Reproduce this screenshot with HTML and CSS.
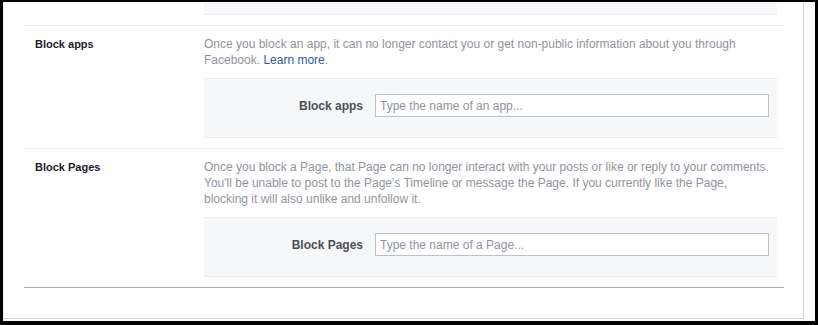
FILE: index.html
```html
<!DOCTYPE html>
<html lang="en">
<head>
<meta charset="utf-8">
<title>Blocking</title>
<link rel="stylesheet" href="styles.css">
</head>
<body>
<div class="frame">
  <div class="panel">
    <div class="row row-prev">
      <div class="row-title"></div>
      <div class="row-body">
        <div class="gray-box gray-box-tail"></div>
      </div>
    </div>
    <div class="row">
      <div class="row-title">Block apps</div>
      <div class="row-body">
        <p class="desc">Once you block an app, it can no longer contact you or get non-public information about you through Facebook. <a class="link" href="#">Learn more</a>.</p>
        <div class="gray-box">
          <label class="field-label" for="apps">Block apps</label>
          <input class="field-input" id="apps" type="text" placeholder="Type the name of an app...">
        </div>
      </div>
    </div>
    <div class="row">
      <div class="row-title">Block Pages</div>
      <div class="row-body">
        <p class="desc">Once you block a Page, that Page can no longer interact with your posts or like or reply to your comments. You'll be unable to post to the Page's Timeline or message the Page. If you currently like the Page, blocking it will also unlike and unfollow it.</p>
        <div class="gray-box">
          <label class="field-label" for="pages">Block Pages</label>
          <input class="field-input" id="pages" type="text" placeholder="Type the name of a Page...">
        </div>
      </div>
    </div>
    <div class="end-rule"></div>
  </div>
</div>
</body>
</html>
```

FILE: styles.css
```css
* { box-sizing: border-box; }

html, body {
  margin: 0;
  padding: 0;
  background: #000;
}

body {
  font-family: "Liberation Sans", Arial, sans-serif;
  font-size: 12px;
  color: #1d2129;
}

.frame {
  margin: 2px 3px 0 3px;
  width: 812px;
  height: 319px;
  background: #fff;
  padding-right: 11px;
}

.panel {
  width: 801px;
  height: 317px;
  border-left: 1px solid #eceef1;
  border-right: 1px solid #cfd1d5;
  border-bottom: 1px solid #cfd1d5;
  padding: 0 19px 0 20px;
}

.row {
  display: flex;
  border-top: 1px solid #e9ebee;
  padding: 10px 0;
}

.row-prev {
  border-top: none;
  padding-top: 0;
}

.row-title {
  width: 180px;
  flex: none;
  padding-left: 11px;
  font-size: 11px;
  font-weight: bold;
  line-height: 16px;
  color: #1d2129;
}

.row-body {
  width: 573px;
  flex: none;
}

.desc {
  margin: 0 0 10px 0;
  max-width: 569px;
  font-size: 12px;
  line-height: 16px;
  color: #90949c;
}

.link {
  color: #365899;
  text-decoration: none;
}

.gray-box {
  display: flex;
  align-items: center;
  background: #f6f7f9;
  border-top: 1px solid #e9ebee;
  border-bottom: 1px solid #e9ebee;
  padding: 15px 8px 20px 0;
}

.gray-box-tail {
  border-top: none;
  height: 13px;
  padding: 0;
}

.field-label {
  width: 159px;
  flex: none;
  text-align: right;
  font-size: 12px;
  font-weight: bold;
  color: #4b4f56;
  margin-right: 12px;
}

.field-input {
  width: 394px;
  height: 23px;
  border: 1px solid #bdc1c9;
  padding: 0 4px;
  margin: 0;
  font-family: "Liberation Sans", Arial, sans-serif;
  font-size: 12px;
  color: #1d2129;
  background: #fff;
  outline: none;
}

.field-input::placeholder {
  color: #90949c;
  opacity: 1;
}

.end-rule {
  border-top: 1px solid #a8abaf;
}
```
